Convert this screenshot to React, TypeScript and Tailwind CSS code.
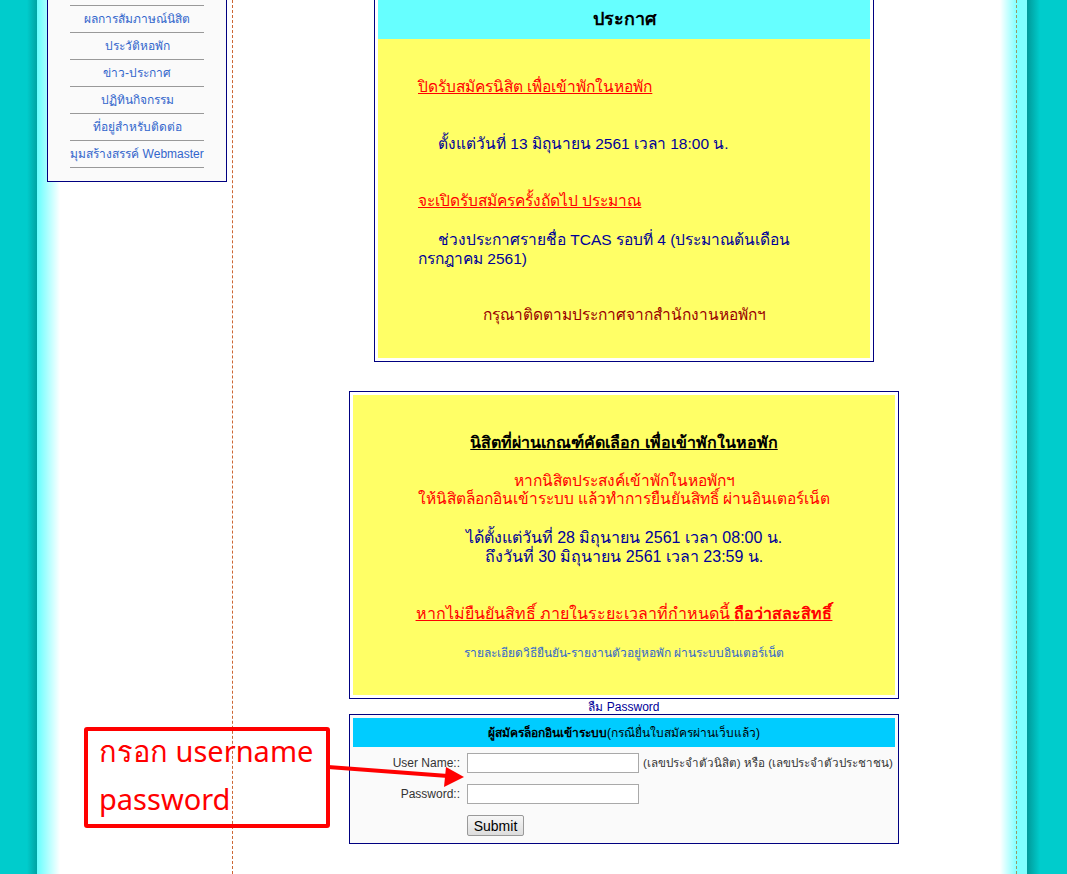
import React from 'react';

const MENU = [
  'ผลการสัมภาษณ์นิสิต',
  'ประวัติหอพัก',
  'ข่าว-ประกาศ',
  'ปฏิทินกิจกรรม',
  'ที่อยู่สำหรับติดต่อ',
  'มุมสร้างสรรค์ Webmaster',
];

const FONT = "font-['Tahoma','Liberation_Sans','Noto_Sans',sans-serif]";

function Sidebar() {
  return (
    <aside className="w-[196px] shrink-0 pl-[10px] border-r border-dashed border-[#cc6633]">
      <div className="w-[180px] border border-t-0 border-[#000080] bg-[#fafafa] pb-[13px]">
        <div className="h-[6px] mx-[22px] border-b border-[#999999]" />
        {MENU.map(m => (
          <div key={m}
            className="h-[27px] mx-[22px] border-b border-[#999999] flex items-center justify-center text-[12px] text-[#3366cc] whitespace-nowrap">
            {m}
          </div>
        ))}
      </div>
    </aside>
  );
}

function Announcement() {
  return (
    <div className="w-[500px] -mt-[4px] border border-[#000080] p-[3px]">
      <div className="h-[39px] bg-[#66ffff] flex items-center justify-center text-[18px] font-bold text-black">
        ประกาศ
      </div>
      <div className="h-[319px] bg-[#ffff66] pl-[40px] text-[15.5px] leading-[19px]">
        <p className="pt-[38px] text-[#ff0000] underline">ปิดรับสมัครนิสิต เพื่อเข้าพักในหอพัก</p>
        <p className="mt-[38px] pl-[20px] text-[#000099]">ตั้งแต่วันที่ 13 มิถุนายน 2561 เวลา 18:00 น.</p>
        <p className="mt-[38px] text-[#ff0000] underline">จะเปิดรับสมัครครั้งถัดไป ประมาณ</p>
        <p className="mt-[20px] text-[#000099] indent-[20px]">
          ช่วงประกาศรายชื่อ TCAS รอบที่ 4 (ประมาณต้นเดือน<br />กรกฎาคม 2561)
        </p>
        <p className="mt-[37px] -ml-[40px] text-center text-[#990000]">กรุณาติดตามประกาศจากสำนักงานหอพักฯ</p>
      </div>
    </div>
  );
}

function Confirm() {
  return (
    <div className="w-[550px] mt-[29px] border border-[#000080] p-[3px]">
      <div className="h-[300px] bg-[#ffff66] text-center text-[16px]">
        <p className="pt-[38px] leading-[19px] font-bold underline text-black">นิสิตที่ผ่านเกณฑ์คัดเลือก เพื่อเข้าพักในหอพัก</p>
        <p className="mt-[20px] leading-[18px] text-[15.5px] text-[#ff0000]">
          หากนิสิตประสงค์เข้าพักในหอพักฯ<br />ให้นิสิตล็อกอินเข้าระบบ แล้วทำการยืนยันสิทธิ์ ผ่านอินเตอร์เน็ต
        </p>
        <p className="mt-[20px] leading-[19px] text-[#000099]">
          ได้ตั้งแต่วันที่ 28 มิถุนายน 2561 เวลา 08:00 น.<br />ถึงวันที่ 30 มิถุนายน 2561 เวลา 23:59 น.
        </p>
        <p className="mt-[38px] leading-[19px] text-[#ff0000] underline">
          หากไม่ยืนยันสิทธิ์ ภายในระยะเวลาที่กำหนดนี้ <span className="font-bold">ถือว่าสละสิทธิ์</span>
        </p>
        <p className="mt-[23px] leading-[15px] text-[12px] text-[#3366cc]">
          รายละเอียดวิธียืนยัน-รายงานตัวอยู่หอพัก ผ่านระบบอินเตอร์เน็ต
        </p>
      </div>
    </div>
  );
}

function Login() {
  return (
    <>
      <div className="h-[15px] flex items-center justify-center text-[12px] text-[#000099]">ลืม Password</div>
      <div className="w-[550px] border border-[#000080] p-[3px] bg-[#fafafa] text-[12px]">
        <div className="h-[29px] bg-[#00ccff] flex items-center justify-center text-black">
          <span className="font-bold">ผู้สมัครล็อกอินเข้าระบบ</span>(กรณียื่นใบสมัครผ่านเว็บแล้ว)
        </div>
        <div className="grid grid-cols-[107px_1fr] gap-x-[7px] gap-y-[11px] pt-[6px] pb-[4px] items-center">
          <span className="text-right text-[#333333]">User Name::</span>
          <div className="flex items-center gap-[4px]">
            <input className="w-[172px] h-[20px] border border-[#a9a9a9] bg-white" />
            <span className="text-[#333333] text-[11.6px] whitespace-nowrap">(เลขประจำตัวนิสิต) หรือ (เลขประจำตัวประชาชน)</span>
          </div>
          <span className="text-right text-[#333333]">Password::</span>
          <input type="password" className="w-[172px] h-[20px] border border-[#a9a9a9] bg-white" />
          <span />
          <button className="w-[57px] h-[21px] border border-[#999999] rounded-[2px] bg-[linear-gradient(#f6f6f6,#dddddd)] text-[14px] text-black font-['Liberation_Sans',sans-serif]">
            Submit
          </button>
        </div>
      </div>
    </>
  );
}

function Callout() {
  return (
    <>
      <div className="absolute left-[84px] top-[727px] w-[246px] h-[101px] border-4 border-[#ff0000] rounded-[3px] pl-[11px] text-[#ff0000] text-[29px] leading-[48px] font-['Noto_Sans',sans-serif]">
        <div className="-mt-[4px]">กรอก username</div>
        <div>password</div>
      </div>
      <svg className="absolute left-0 top-0" width="1067" height="874" viewBox="0 0 1067 874">
        <line x1="328" y1="767" x2="448" y2="776" stroke="#ff0000" strokeWidth="4" />
        <polygon points="464,777 446,767 444,787" fill="#ff0000" />
      </svg>
    </>
  );
}

export default function App() {
  return (
    <div className={`relative w-[1067px] h-[874px] overflow-hidden flex bg-[#00cccc] ${FONT}`}>
      <div className="w-[37px] shrink-0 bg-[linear-gradient(to_right,#00cccc_0px,#00cccc_27px,#00a3a3_37px)]" />
      <div className="w-[990px] shrink-0 flex bg-[linear-gradient(to_right,#66ffff_0px,#ffffff_23px,#ffffff_963px,#80ffff_980px,#80ffff_990px)]">
        <Sidebar />
        <main className="w-[782px] shrink-0 flex flex-col items-center">
          <Announcement />
          <Confirm />
          <Login />
        </main>
        <div className="w-[2px] shrink-0 border-r border-dashed border-[#999966]" />
      </div>
      <div className="flex-1 bg-[linear-gradient(to_right,#009999_0px,#00cccc_13px)]" />
      <Callout />
    </div>
  );
}
